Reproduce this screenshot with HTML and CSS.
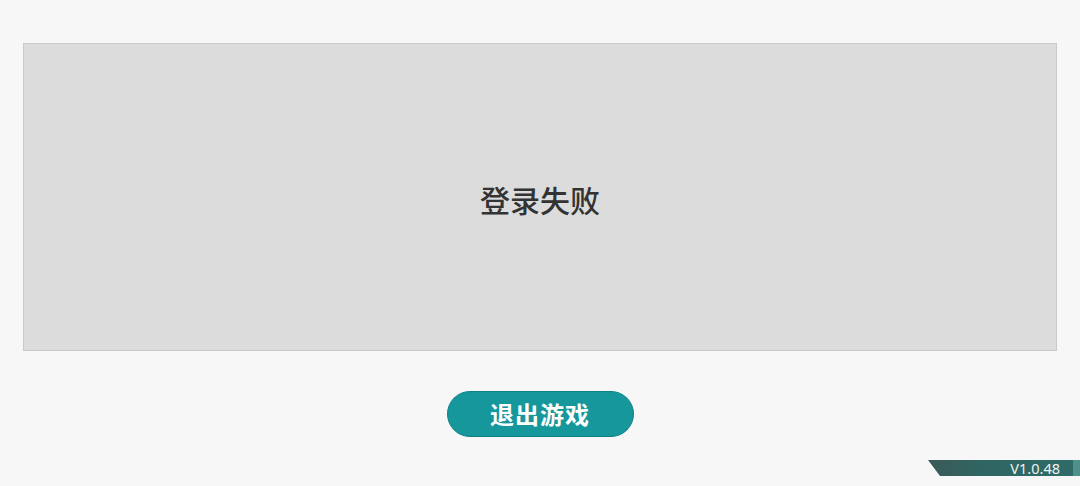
FILE: index.html
```html
<!DOCTYPE html>
<html lang="zh">
<head>
<meta charset="utf-8">
<link rel="stylesheet" href="styles.css">
</head>
<body>
<div class="page">
  <div class="panel">
    <div class="message">登录失败</div>
  </div>
  <div class="actions">
    <button class="exit-btn">退出游戏</button>
  </div>
</div>
<div class="version">
  <span class="version-text">V1.0.48</span>
  <span class="version-tip"></span>
</div>
</body>
</html>
```

FILE: styles.css
```css
html, body {
  margin: 0;
  padding: 0;
  width: 1080px;
  height: 486px;
  overflow: hidden;
  background: #f7f7f7;
  font-family: "Noto Sans CJK SC", "Noto Sans", sans-serif;
}
.page {
  padding: 43px 23px 0 23px;
  display: flex;
  flex-direction: column;
}
.panel {
  height: 306px;
  background: #dcdcdc;
  border: 1px solid #cacaca;
  display: flex;
  align-items: center;
  justify-content: center;
}
.message {
  font-size: 30px;
  font-weight: 500;
  color: #333333;
  margin-top: 4px;
}
.actions {
  display: flex;
  justify-content: center;
  padding-top: 40px;
}
.exit-btn {
  width: 187px;
  height: 46px;
  border-radius: 23px;
  background: #15979c;
  border: 1px solid #0f7f84;
  color: #ffffff;
  font-family: "Noto Sans CJK SC", sans-serif;
  font-weight: 700;
  font-size: 24px;
  letter-spacing: 1px;
  padding: 0;
  line-height: 44px;
}
.version {
  position: absolute;
  left: 928px;
  top: 460px;
  width: 152px;
  height: 16px;
  display: flex;
  justify-content: flex-end;
  align-items: center;
}
.version::before {
  content: "";
  position: absolute;
  left: 0;
  top: 0;
  right: 7px;
  bottom: 0;
  background: linear-gradient(90deg, #3a5a58 0%, #2f6662 40%, #2e6b68 100%);
  clip-path: polygon(0 0, 100% 0, 100% 100%, 12px 100%);
}
.version-tip {
  position: absolute;
  right: 0;
  top: 0;
  width: 7px;
  height: 16px;
  background: #4f8f8a;
}
.version-text {
  position: relative;
  color: #f2f2f2;
  font-family: "Noto Sans", sans-serif;
  font-size: 14.5px;
  line-height: 16px;
  margin-right: 20px;
}
```
